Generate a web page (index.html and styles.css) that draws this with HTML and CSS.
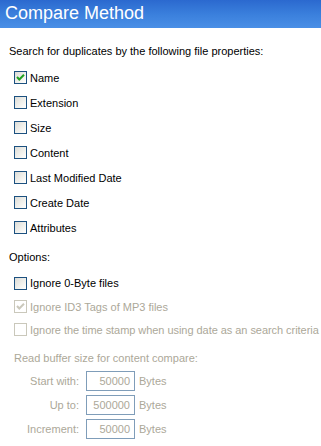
FILE: index.html
```html
<!DOCTYPE html>
<html>
<head>
<meta charset="utf-8">
<link rel="stylesheet" href="styles.css">
</head>
<body>
<div class="header">Compare Method</div>
<div class="content">
  <div class="line search">Search for duplicates by the following file properties:</div>
  <div class="group props">
    <div class="row"><span class="cb on"><svg viewBox="0 0 13 13" width="13" height="13"><path d="M3 6 L5.3 8.5 L10 3.8" fill="none" stroke="#21a121" stroke-width="2"/></svg></span><span>Name</span></div>
    <div class="row"><span class="cb"></span><span>Extension</span></div>
    <div class="row"><span class="cb"></span><span>Size</span></div>
    <div class="row"><span class="cb"></span><span>Content</span></div>
    <div class="row"><span class="cb"></span><span>Last Modified Date</span></div>
    <div class="row"><span class="cb"></span><span>Create Date</span></div>
    <div class="row"><span class="cb"></span><span>Attributes</span></div>
  </div>
  <div class="line options">Options:</div>
  <div class="group opts">
    <div class="row r24"><span class="cb"></span><span>Ignore 0-Byte files</span></div>
    <div class="row r23 dis"><span class="cb"><svg viewBox="0 0 13 13" width="13" height="13"><path d="M3 6 L5.3 8.5 L10 3.8" fill="none" stroke="#cac8bb" stroke-width="2"/></svg></span><span>Ignore ID3 Tags of MP3 files</span></div>
    <div class="row r23 dis"><span class="cb"></span><span class="tight">Ignore the time stamp when using date as an search criteria</span></div>
  </div>
  <div class="line buffer dis">Read buffer size for content compare:</div>
  <div class="fields dis">
    <div class="field"><span class="flabel">Start with:</span><span class="input">50000</span><span>Bytes</span></div>
    <div class="field"><span class="flabel">Up to:</span><span class="input">500000</span><span>Bytes</span></div>
    <div class="field"><span class="flabel">Increment:</span><span class="input">50000</span><span>Bytes</span></div>
  </div>
</div>
</body>
</html>
```
FILE: styles.css
```css
html, body {
  margin: 0;
  padding: 0;
  background: #ffffff;
}
body {
  width: 321px;
  height: 446px;
  overflow: hidden;
  font-family: "Liberation Sans", Arial, sans-serif;
  font-size: 11px;
  color: #000000;
}
.header {
  height: 28px;
  line-height: 27px;
  padding-left: 5px;
  font-size: 18px;
  color: #ffffff;
  background: linear-gradient(to bottom, #2b69cf 0%, #3a7fdc 50%, #4a8fe6 100%);
}
.content {
  padding-left: 9px;
}
.line {
  height: 13px;
  line-height: 13px;
  white-space: nowrap;
}
.search {
  margin-top: 17px;
}
.props {
  margin-top: 7px;
  padding-left: 5px;
}
.row {
  display: flex;
  align-items: center;
  height: 25px;
  gap: 3px;
  white-space: nowrap;
}
.r24 { height: 24px; }
.r23 { height: 23px; }
.tight { letter-spacing: -0.05px; }
.cb {
  box-sizing: border-box;
  width: 13px;
  height: 13px;
  flex: none;
  border: 1px solid #1c5180;
  background: linear-gradient(135deg, #dcdcd7 0%, #f2f2ee 60%, #ffffff 100%);
  position: relative;
}
.cb svg {
  position: absolute;
  left: -1px;
  top: -1px;
}
.dis { color: #aca899; }
.dis .cb {
  border-color: #cac8bb;
  background: #ffffff;
}
.options {
  margin-top: 11px;
}
.opts {
  margin-top: 7px;
  padding-left: 5px;
}
.buffer {
  margin-top: 11px;
  padding-left: 5px;
}
.fields {
  margin-top: 6px;
  display: flex;
  flex-direction: column;
  gap: 4px;
}
.field {
  display: flex;
  align-items: center;
  height: 20px;
  white-space: nowrap;
}
.flabel {
  width: 70px;
  text-align: right;
  margin-right: 7px;
}
.input {
  box-sizing: border-box;
  width: 49px;
  height: 20px;
  line-height: 18px;
  border: 1px solid #7f9db9;
  text-align: right;
  padding-right: 4px;
  margin-right: 4px;
}
```
